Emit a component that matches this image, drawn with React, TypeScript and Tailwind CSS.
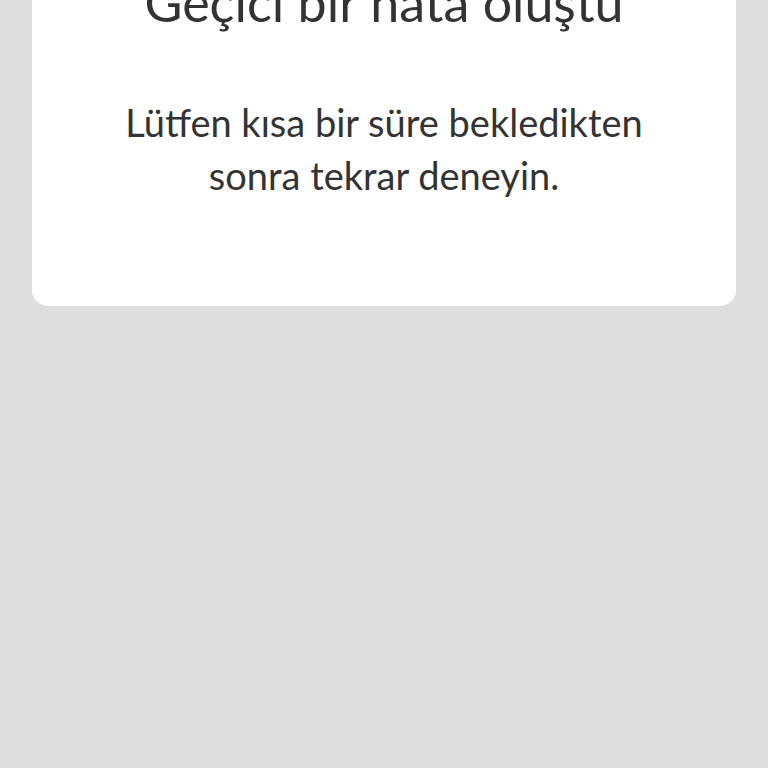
export default function App() {
  return (
    <div className="min-h-[768px] w-full bg-[#dedede] px-8 overflow-hidden" style={{ fontFamily: "Lato, 'Open Sans', sans-serif" }}>
      <div className="-mt-[65px] bg-white rounded-[16px] pt-[40px] pb-[104px] flex flex-col items-center text-[#333333]">
        <h1 className="text-[52px] leading-[54px] font-normal text-center">Geçici bir hata oluştu</h1>
        <p className="mt-[67px] text-[38px] leading-[53px] text-center">
          Lütfen kısa bir süre bekledikten
          <br />
          sonra tekrar deneyin.
        </p>
      </div>
    </div>
  );
}
